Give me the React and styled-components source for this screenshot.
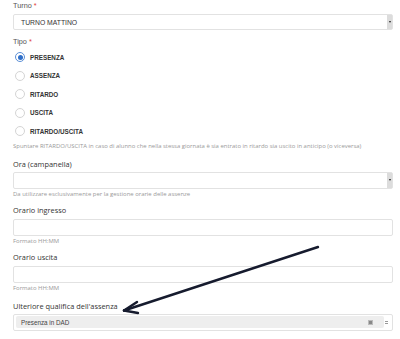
import React from "react";
import styled, { createGlobalStyle } from "styled-components";

const Global = createGlobalStyle`
  html, body { margin: 0; padding: 0; background: #fff; }
  body { width: 400px; height: 339px; overflow: hidden; }
`;

const Page = styled.div`
  position: relative;
  width: 400px;
  height: 339px;
  padding: 0 7px 0 13px;
  box-sizing: border-box;
`;

const Group = styled.div`
  display: flex;
  flex-direction: column;
  margin-top: ${(p) => p.$mt || 0}px;
`;

const Label = styled.div`
  height: 12px;
  line-height: 12px;
  font-family: ${(p) => (p.$sans ? '"Liberation Sans", Arial, sans-serif' : '"Open Sans", sans-serif')};
  font-size: ${(p) => (p.$sans ? 7.3 : 7.4)}px;
  font-weight: 400;
  color: ${(p) => (p.$sans ? "#555" : "#333")};
  white-space: nowrap;
`;

const Req = styled.span`
  color: #e0403a;
`;

const Control = styled.div`
  position: relative;
  margin-top: ${(p) => p.$mt ?? 3}px;
  height: ${(p) => p.$h || 17}px;
  border: 1px solid #e2e2e2;
  border-radius: 2px;
  box-sizing: border-box;
  display: flex;
  align-items: center;
  background: #fff;
`;

const SelectText = styled.span`
  flex: 1;
  padding-left: 7px;
  font-family: "Liberation Sans", Arial, sans-serif;
  font-size: 6.8px;
  color: #333;
`;

const NativeArrow = styled.div`
  width: 5px;
  align-self: stretch;
  background: #dcdcdc;
  display: flex;
  align-items: center;
  justify-content: center;
  &::after {
    content: "";
    border-left: 1.5px solid transparent;
    border-right: 1.5px solid transparent;
    border-top: 2px solid #222;
  }
`;

const Help = styled.div`
  height: 10px;
  line-height: 10px;
  font-family: "Open Sans", sans-serif;
  font-size: 5.95px;
  color: #9a9a9a;
  white-space: nowrap;
`;

const RadioList = styled.div`
  display: flex;
  flex-direction: column;
`;

const RadioRow = styled.div`
  height: 18.5px;
  display: flex;
  align-items: center;
  gap: 5px;
  padding-left: 2px;
`;

const Circle = styled.span`
  width: 10px;
  height: 10px;
  border-radius: 50%;
  box-sizing: border-box;
  border: 1px solid ${(p) => (p.$on ? "#5b8fd6" : "#d4d4d4")};
  display: flex;
  align-items: center;
  justify-content: center;
  &::after {
    content: "";
    width: 5px;
    height: 5px;
    border-radius: 50%;
    background: #2f6fc9;
    display: ${(p) => (p.$on ? "block" : "none")};
  }
`;

const RadioText = styled.span`
  font-family: "Liberation Sans", Arial, sans-serif;
  font-size: 6.3px;
  font-weight: 700;
  color: #333;
`;

const Pill = styled.div`
  flex: 1;
  margin: 0 8px 0 2px;
  height: 12px;
  background: #eeeeee;
  border-radius: 2px;
  display: flex;
  align-items: center;
  padding-left: 5px;
  font-family: "Liberation Sans", Arial, sans-serif;
  font-size: 6.3px;
  color: #444;
`;

const PillText = styled.span`
  flex: 1;
`;

const Clear = styled.span`
  width: 3px;
  height: 3px;
  background: #888;
  margin-right: 11px;
  border: 0.5px solid #bbb;
`;

const Caret = styled.span`
  position: absolute;
  right: 4px;
  top: 6px;
  width: 3px;
  border-top: 1px solid #999;
  border-bottom: 1px solid #999;
  height: 1px;
`;

const ArrowSvg = styled.svg`
  position: absolute;
  left: 0;
  top: 0;
  pointer-events: none;
`;

const radios = ["PRESENZA", "ASSENZA", "RITARDO", "USCITA", "RITARDO/USCITA"];

export default function App() {
  return (
    <>
      <Global />
      <Page>
        <Group>
          <Label $sans>
            Turno <Req>*</Req>
          </Label>
          <Control $mt={2} $h={16}>
            <SelectText>TURNO MATTINO</SelectText>
            <NativeArrow />
          </Control>
        </Group>

        <Group $mt={6}>
          <Label $sans>
            Tipo <Req>*</Req>
          </Label>
          <RadioList>
            {radios.map((r, i) => (
              <RadioRow key={r}>
                <Circle $on={i === 0} />
                <RadioText>{r}</RadioText>
              </RadioRow>
            ))}
          </RadioList>
          <Help>
            Spuntare RITARDO/USCITA in caso di alunno che nella stessa giornata è sia entrato in ritardo sia uscito in anticipo (o viceversa)
          </Help>
        </Group>

        <Group $mt={7}>
          <Label>Ora (campanella)</Label>
          <Control $mt={2}>
            <SelectText />
            <NativeArrow />
          </Control>
          <Help>Da utilizzare esclusivamente per la gestione orarie delle assenze</Help>
        </Group>

        <Group $mt={5}>
          <Label>Orario ingresso</Label>
          <Control />
          <Help>Formato HH:MM</Help>
        </Group>

        <Group $mt={5}>
          <Label>Orario uscita</Label>
          <Control />
          <Help>Formato HH:MM</Help>
        </Group>

        <Group $mt={7}>
          <Label>Ulteriore qualifica dell'assenza</Label>
          <Control $mt={2}>
            <Pill>
              <PillText>Presenza in DAD</PillText>
              <Clear />
            </Pill>
            <Caret />
          </Control>
        </Group>

        <ArrowSvg width="400" height="339" viewBox="0 0 400 339">
          <g stroke="#161b2e" strokeWidth="2.4" strokeLinecap="round" fill="none">
            <path d="M318 247 L124 310.5" />
            <path d="M124 310.5 L137 302" />
            <path d="M124 310.5 L138 313" />
          </g>
        </ArrowSvg>
      </Page>
    </>
  );
}
